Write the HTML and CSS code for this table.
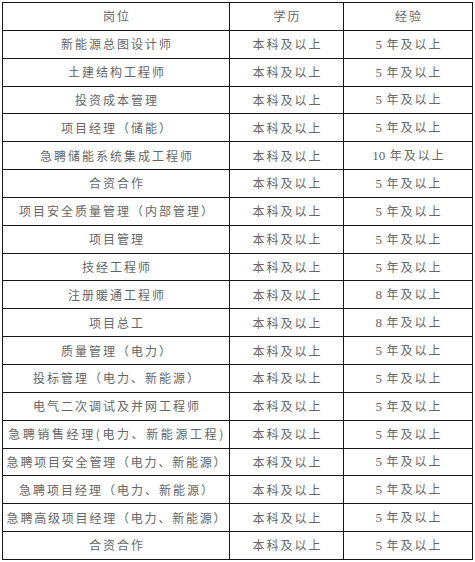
FILE: index.html
```html
<!DOCTYPE html>
<html lang="zh-CN">
<head>
<meta charset="utf-8">
<title>岗位</title>
<link rel="stylesheet" href="styles.css">
</head>
<body>
<table class="jobs">
  <colgroup>
    <col class="c-pos">
    <col class="c-edu">
    <col class="c-exp">
  </colgroup>
  <thead>
    <tr><th>岗位</th><th>学历</th><th>经验</th></tr>
  </thead>
  <tbody>
    <tr><td>新能源总图设计师</td><td>本科及以上</td><td><span class="num">5</span> 年及以上</td></tr>
    <tr><td>土建结构工程师</td><td>本科及以上</td><td><span class="num">5</span> 年及以上</td></tr>
    <tr><td>投资成本管理</td><td>本科及以上</td><td><span class="num">5</span> 年及以上</td></tr>
    <tr><td>项目经理（储能）</td><td>本科及以上</td><td><span class="num">5</span> 年及以上</td></tr>
    <tr><td>急聘储能系统集成工程师</td><td>本科及以上</td><td><span class="num">10</span> 年及以上</td></tr>
    <tr><td>合资合作</td><td>本科及以上</td><td><span class="num">5</span> 年及以上</td></tr>
    <tr><td>项目安全质量管理（内部管理）</td><td>本科及以上</td><td><span class="num">5</span> 年及以上</td></tr>
    <tr><td>项目管理</td><td>本科及以上</td><td><span class="num">5</span> 年及以上</td></tr>
    <tr><td>技经工程师</td><td>本科及以上</td><td><span class="num">5</span> 年及以上</td></tr>
    <tr><td>注册暖通工程师</td><td>本科及以上</td><td><span class="num">8</span> 年及以上</td></tr>
    <tr><td>项目总工</td><td>本科及以上</td><td><span class="num">8</span> 年及以上</td></tr>
    <tr><td>质量管理（电力）</td><td>本科及以上</td><td><span class="num">5</span> 年及以上</td></tr>
    <tr><td>投标管理（电力、新能源）</td><td>本科及以上</td><td><span class="num">5</span> 年及以上</td></tr>
    <tr><td>电气二次调试及并网工程师</td><td>本科及以上</td><td><span class="num">5</span> 年及以上</td></tr>
    <tr><td class="wide">急聘销售经理(电力、新能源工程)</td><td>本科及以上</td><td><span class="num">5</span> 年及以上</td></tr>
    <tr><td class="tight">急聘项目安全管理（电力、新能源）</td><td>本科及以上</td><td><span class="num">5</span> 年及以上</td></tr>
    <tr><td>急聘项目经理（电力、新能源）</td><td>本科及以上</td><td><span class="num">5</span> 年及以上</td></tr>
    <tr><td class="tight">急聘高级项目经理（电力、新能源）</td><td>本科及以上</td><td><span class="num">5</span> 年及以上</td></tr>
    <tr><td>合资合作</td><td>本科及以上</td><td><span class="num">5</span> 年及以上</td></tr>
  </tbody>
</table>
</body>
</html>
```
FILE: styles.css
```css
html, body {
  margin: 0;
  padding: 0;
  background: #ffffff;
}

body {
  padding: 2px 0 0 2px;
}

.jobs {
  border-collapse: collapse;
  table-layout: fixed;
  width: 470px;
  font-family: "Noto Sans CJK SC", "Liberation Serif", sans-serif;
  font-size: 12px;
  color: #666666;
}

.c-pos { width: 227px; }
.c-edu { width: 114px; }
.c-exp { width: 129px; }

.jobs th,
.jobs td {
  border: 1px solid #161616;
  height: 26.85px;
  padding: 0;
  text-align: center;
  vertical-align: middle;
  font-weight: normal;
  white-space: nowrap;
  letter-spacing: 2px;
  text-indent: 2px;
  line-height: 1;
}

.jobs td.tight {
  letter-spacing: 1.8px;
}

.jobs td.wide {
  letter-spacing: 2.6px;
}

.num {
  font-family: "Liberation Serif", serif;
  font-size: 13px;
  letter-spacing: 0;
}
```
